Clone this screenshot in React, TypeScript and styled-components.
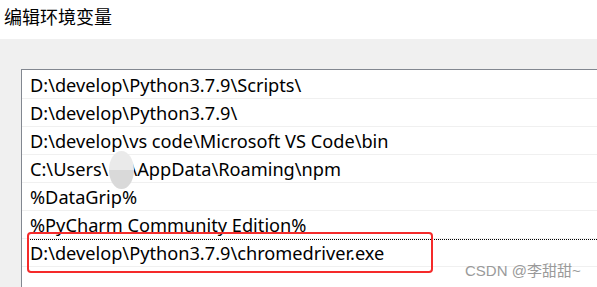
import React from 'react'
import styled, { createGlobalStyle } from 'styled-components'

const GlobalStyle = createGlobalStyle`
  html, body {
    margin: 0;
    padding: 0;
    background: #f0f0f0;
  }
  body {
    font-family: 'Noto Sans', 'Noto Sans CJK SC', sans-serif;
    overflow: hidden;
  }
`

const Window = styled.div`
  position: relative;
  width: 597px;
  height: 287px;
  display: flex;
  flex-direction: column;
  background: #f0f0f0;
  overflow: hidden;
`
const TitleBar = styled.div`
  height: 39px;
  flex-shrink: 0;
  background: #fff;
  display: flex;
  align-items: flex-start;
  padding: 3px 0 0 4px;
  box-sizing: border-box;
  font-family: 'Noto Sans CJK SC', sans-serif;
  font-size: 18px;
  color: #000;
`
const Body = styled.div`
  flex: 1;
  padding: 30px 0 0 21px;
  display: flex;
`
const ListBox = styled.div`
  flex: 1;
  background: #fff;
  border: 1px solid #828790;
  border-right: none;
  border-bottom: none;
  padding-top: 1px;
`
const Row = styled.div<{ $focused?: boolean }>`
  height: 27px;
  border-bottom: 1px solid #f0f0f0;
  display: flex;
  align-items: center;
  padding-left: 8px;
  font-size: 18.2px;
  color: #000;
  white-space: pre;
  position: relative;
  ${(p) =>
    p.$focused &&
    `
    &::before {
      content: '';
      position: absolute;
      left: 8px;
      right: 0;
      top: 0;
      border-top: 1px dotted #000;
    }
  `}
`
const Hidden = styled.span`
  position: relative;
  display: inline-block;
  width: 22px;
  align-self: stretch;
`
const Smudge = styled.span`
  position: absolute;
  left: 1px;
  top: -4px;
  width: 25px;
  height: 38px;
  border-radius: 50%;
  background: linear-gradient(#eaeaea 0 50%, #d9d9d9 50% 100%);
  filter: blur(0.6px);
`
const Highlight = styled.div`
  position: absolute;
  left: 27px;
  top: 232px;
  width: 406px;
  height: 41px;
  box-sizing: border-box;
  border: 2px solid #f52a2a;
  border-radius: 4px;
`
const Watermark = styled.div`
  position: absolute;
  left: 465px;
  top: 259px;
  font-family: 'Liberation Sans', 'Noto Sans CJK SC', sans-serif;
  font-size: 15px;
  color: #9a9a9a;
  white-space: nowrap;
`

const paths: React.ReactNode[] = [
  'D:\\develop\\Python3.7.9\\Scripts\\',
  'D:\\develop\\Python3.7.9\\',
  'D:\\develop\\vs code\\Microsoft VS Code\\bin',
  <>
    C:\Users\
    <Hidden>
      <Smudge />
    </Hidden>
    \AppData\Roaming\npm
  </>,
  '%DataGrip%',
  '%PyCharm Community Edition%',
  'D:\\develop\\Python3.7.9\\chromedriver.exe',
]

const App = () => (
  <>
    <GlobalStyle />
    <Window>
      <TitleBar>编辑环境变量</TitleBar>
      <Body>
        <ListBox>
          {paths.map((p, i) => (
            <Row key={i} $focused={i === paths.length - 1}>
              {p}
            </Row>
          ))}
        </ListBox>
      </Body>
      <Highlight />
      <Watermark>CSDN @李甜甜~</Watermark>
    </Window>
  </>
)

export default App
